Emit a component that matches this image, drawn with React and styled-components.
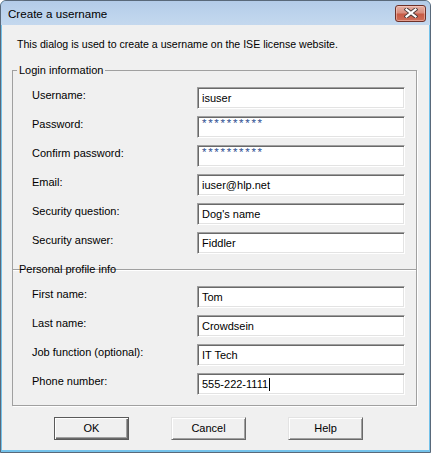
import React from "react";
import styled, { createGlobalStyle } from "styled-components";

const Global = createGlobalStyle`
  html, body { margin: 0; padding: 0; background: #ffffff; }
  body { font-family: "Liberation Sans", Arial, sans-serif; }
  * { box-sizing: border-box; }
`;

const Window = styled.div`
  width: 431px;
  height: 453px;
  display: flex;
  flex-direction: column;
  border: 1px solid #59697a;
  border-radius: 6px 6px 0 0;
  background: #74c2ea;
  overflow: hidden;
`;

const TitleBar = styled.div`
  height: 24px;
  flex: none;
  display: flex;
  align-items: center;
  justify-content: space-between;
  padding: 0 4px 0 7px;
  background: linear-gradient(to bottom, #b3cbe8 0%, #bcd3ec 50%, #c4d8ee 100%);
`;

const Title = styled.div`
  font-size: 11.6px;
  line-height: 13px;
  padding-top: 1px;
  color: #000;
`;

const CloseButton = styled.div`
  width: 31px;
  height: 17px;
  border: 1px solid #6e3129;
  border-radius: 3px;
  background: linear-gradient(to bottom, #e4b0a5 0%, #d98e7f 45%, #c75b46 55%, #cf6e5a 100%);
  box-shadow: inset 0 0 0 1px rgba(255, 220, 210, 0.45);
  display: flex;
  align-items: center;
  justify-content: center;
`;

const Client = styled.div`
  flex: 1;
  margin: 0 1px 2px 1px;
  background: #f0f0f0;
  padding: 13px 12px 0 10px;
  display: flex;
  flex-direction: column;
  font-size: 11px;
  line-height: 13px;
  color: #000;
`;

const Intro = styled.div`
  padding-left: 5px;
  font-size: 10.6px;
`;

const Group = styled.fieldset`
  margin: ${(p) => p.$top}px 0 0 0;
  padding: 0;
  border: 1px solid #a0a0a0;
  box-shadow: 1px 1px 0 #ffffff;
  min-width: 0;
`;

const Legend = styled.legend`
  margin-left: 4px;
  padding: 0 2px;
  font-size: 11px;
  line-height: 13px;
`;

const Rows = styled.div`
  display: grid;
  grid-template-columns: 165px 208px;
  row-gap: 7px;
  padding: 10px 0 ${(p) => p.$bottom}px 19px;
`;

const Label = styled.div`
  line-height: 13px;
  padding-top: 2px;
  white-space: nowrap;
`;

const TextBox = styled.div`
  height: 22px;
  border: 1px solid;
  border-color: #a0a0a0 #ffffff #ffffff #a0a0a0;
  box-shadow: inset 1px 1px 0 #696969, inset -1px -1px 0 #e3e3e3;
  background: #ffffff;
  padding: 0 3px ${(p) => (p.$password ? "7px" : "0")} 4px;
  display: flex;
  align-items: center;
  white-space: nowrap;
  font-size: ${(p) => (p.$password ? "11.5px" : "11px")};
  line-height: 13px;
  color: ${(p) => (p.$password ? "#2f4f92" : "#000")};
  letter-spacing: ${(p) => (p.$password ? "1.7px" : "normal")};
`;

const Caret = styled.span`
  display: inline-block;
  width: 1px;
  height: 13px;
  margin-left: 1px;
  background: #000;
`;

const ButtonRow = styled.div`
  display: flex;
  gap: 42px;
  padding-left: 42px;
  margin-top: 11px;
`;

const Button = styled.div`
  width: 75px;
  height: 23px;
  display: flex;
  align-items: center;
  justify-content: center;
  background: #f0f0f0;
  font-size: 11px;
  border: 1px solid;
  border-color: ${(p) => (p.$default ? "#5a5a5a" : "#e3e3e3 #696969 #696969 #e3e3e3")};
  box-shadow: ${(p) =>
    p.$default
      ? "inset 1px 1px 0 #ffffff, inset -1px -1px 0 #696969, inset -2px -2px 0 #a0a0a0"
      : "inset 1px 1px 0 #ffffff, inset -1px -1px 0 #a0a0a0"};
`;

const loginRows = [
  ["Username:", "isuser"],
  ["Password:", "**********", true],
  ["Confirm password:", "**********", true],
  ["Email:", "iuser@hlp.net"],
  ["Security question:", "Dog's name"],
  ["Security answer:", "Fiddler"],
];

const profileRows = [
  ["First name:", "Tom"],
  ["Last name:", "Crowdsein"],
  ["Job function (optional):", "IT Tech"],
  ["Phone number:", "555-222-1111", false, true],
];

function FieldRows({ rows, bottom }) {
  return (
    <Rows $bottom={bottom}>
      {rows.map(([label, value, pw, caret]) => (
        <React.Fragment key={label}>
          <Label>{label}</Label>
          <TextBox $password={pw}>
            {value}
            {caret && <Caret />}
          </TextBox>
        </React.Fragment>
      ))}
    </Rows>
  );
}

export default function App() {
  return (
    <>
      <Global />
      <Window>
        <TitleBar>
          <Title>Create a username</Title>
          <CloseButton>
            <svg width="14" height="10" viewBox="0 0 14 10">
              <path d="M2.5 1.5 L11.5 8.5 M11.5 1.5 L2.5 8.5" stroke="#4a3a38" strokeWidth="4" strokeLinecap="square" />
              <path d="M2.5 1.5 L11.5 8.5 M11.5 1.5 L2.5 8.5" stroke="#ffffff" strokeWidth="2.2" strokeLinecap="square" />
            </svg>
          </CloseButton>
        </TitleBar>
        <Client>
          <Intro>This dialog is used to create a username on the ISE license website.</Intro>
          <Group $top={13}>
            <Legend>Login information</Legend>
            <FieldRows rows={loginRows} bottom={15} />
          </Group>
          <Group $top={-7}>
            <Legend>Personal profile info</Legend>
            <FieldRows rows={profileRows} bottom={10} />
          </Group>
          <ButtonRow>
            <Button $default>OK</Button>
            <Button>Cancel</Button>
            <Button>Help</Button>
          </ButtonRow>
        </Client>
      </Window>
    </>
  );
}
